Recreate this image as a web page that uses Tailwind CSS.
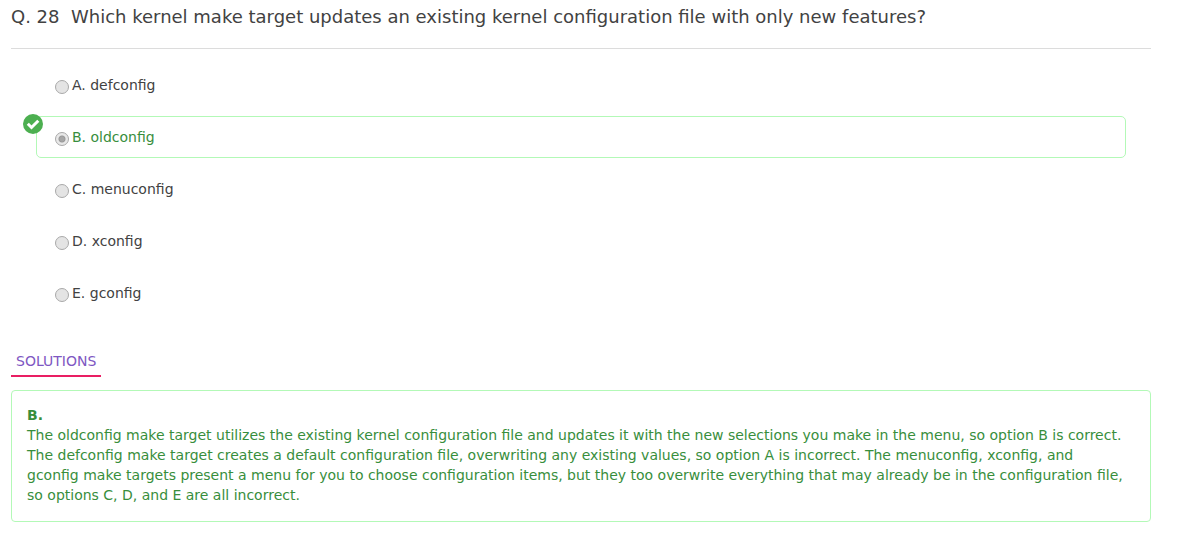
<!DOCTYPE html>
<html lang="en">
<head>
<meta charset="utf-8">
<title>Question 28</title>
<script src="https://cdn.jsdelivr.net/npm/@tailwindcss/browser@4"></script>
</head>
<body class="bg-white font-['DejaVu_Sans',sans-serif] text-sm text-[#424242]">
<main class="pt-1 pr-8 pl-[11px]">
  <h1 class="h-[45px] border-b border-[#dcdcdc] text-lg leading-[26px] whitespace-pre-wrap">Q. 28  Which kernel make target updates an existing kernel configuration file with only new features?</h1>
  <form class="mt-[15px] mr-[25px] ml-[25px] flex flex-col gap-[10px]">
    <label class="flex h-[42px] items-center rounded-[5px] border border-transparent pl-[18px]">
      <input type="radio" name="answer" class="mt-[3px] mr-[3px] size-[14px] appearance-none rounded-full border border-[#a9a9a9] bg-[#e4e4e4]">A. defconfig</label>
    <label class="relative flex h-[42px] items-center rounded-[5px] border border-[#b3f9b7] pl-[18px] text-[#388e3c]">
      <svg class="absolute -top-[3px] -left-[14px] size-5" viewBox="0 0 20 20" aria-hidden="true"><circle cx="10" cy="10" r="10" fill="#4caf50"/><path d="M4.8 9.8l3.7 3.7 6.8-6.8" fill="none" stroke="#fff" stroke-width="3"/></svg>
      <input type="radio" name="answer" checked class="mt-[3px] mr-[3px] size-[14px] appearance-none rounded-full border border-[#a9a9a9] bg-[#e4e4e4] bg-[radial-gradient(circle,#a6a6a6_0_2px,#999_3px,#e8e8e8_4px)]">B. oldconfig</label>
    <label class="flex h-[42px] items-center rounded-[5px] border border-transparent pl-[18px]">
      <input type="radio" name="answer" class="mt-[3px] mr-[3px] size-[14px] appearance-none rounded-full border border-[#a9a9a9] bg-[#e4e4e4]">C. menuconfig</label>
    <label class="flex h-[42px] items-center rounded-[5px] border border-transparent pl-[18px]">
      <input type="radio" name="answer" class="mt-[3px] mr-[3px] size-[14px] appearance-none rounded-full border border-[#a9a9a9] bg-[#e4e4e4]">D. xconfig</label>
    <label class="flex h-[42px] items-center rounded-[5px] border border-transparent pl-[18px]">
      <input type="radio" name="answer" class="mt-[3px] mr-[3px] size-[14px] appearance-none rounded-full border border-[#a9a9a9] bg-[#e4e4e4]">E. gconfig</label>
  </form>
  <a href="#solution" class="mt-[37px] inline-block border-b-2 border-[#e91e63] px-[5px] pb-1 text-[#7e57c2]">SOLUTIONS</a>
  <section id="solution" class="mt-[13px] rounded-[4px] border border-[#b3f9b7] pt-[14px] pr-6 pb-4 pl-[15px] leading-5 text-[#388e3c]">
    <h2 class="font-bold">B.</h2>
    <p>The oldconfig make target utilizes the existing kernel configuration file and updates it with the new selections you make in the menu, so option B is correct. The defconfig make target creates a default configuration file, overwriting any existing values, so option A is incorrect. The menuconfig, xconfig, and gconfig make targets present a menu for you to choose configuration items, but they too overwrite everything that may already be in the configuration file, so options C, D, and E are all incorrect.</p>
  </section>
</main>
</body>
</html>
